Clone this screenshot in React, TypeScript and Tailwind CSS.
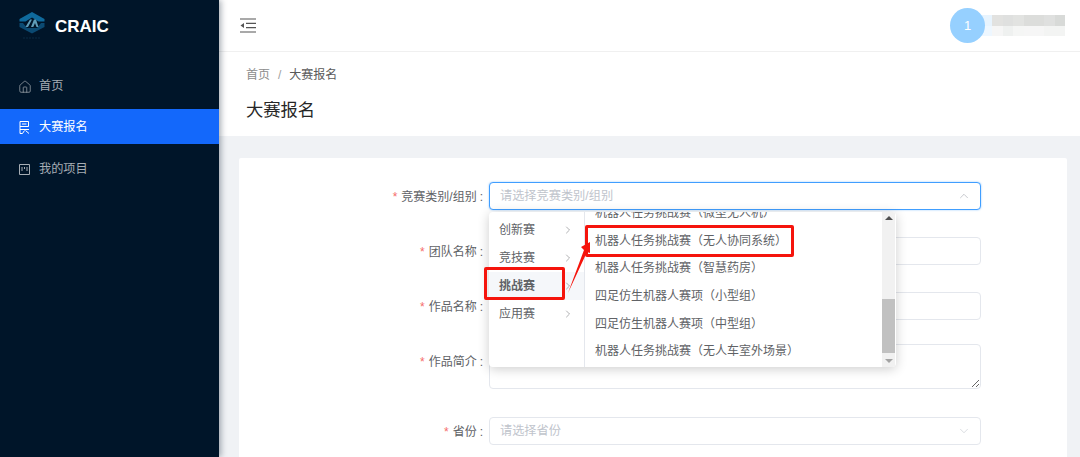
import { ChevronRight, ChevronUp, ChevronDown, Home } from 'lucide-react';

const font = "[font-family:'Liberation_Sans','Noto_Sans_CJK_SC',sans-serif]";

const FIRST_COLUMN = ['创新赛', '竞技赛', '挑战赛', '应用赛'];

const SECOND_COLUMN = [
  '机器人任务挑战赛（无人协同系统）',
  '机器人任务挑战赛（智慧药房）',
  '四足仿生机器人赛项（小型组）',
  '四足仿生机器人赛项（中型组）',
  '机器人任务挑战赛（无人车室外场景）',
];

const MOSAIC_TOP = ['#e8f4fe', '#e2e2e0', '#dfe0df', '#e2e3e1', '#dcdddb', '#dcdddb', '#dfe0df', '#d8dad8'];
const MOSAIC_BOTTOM = ['#eef7ff', '#f6f6f6', '#eff1f0', '#f5f6f5', '#f6f6f6', '#f6f6f6', '#f3f4f3', '#f3f4f3'];

const Logo = () => (
  <svg width="26" height="28" viewBox="0 0 26 28" fill="none">
    <path d="M0.5 7 L13 0 L25.5 7 V9.5 L19.5 9.5 L13 5.5 L6.5 9.5 H0.5 Z" fill="#0f6a9c" />
    <path d="M0.5 11 H4 L8 16 H13 H18 L22 11 H25.5 V15 L13 21.5 L0.5 15 Z" fill="#0b4a72" />
    <path d="M6.5 15 L11 7.5 H13 L9 15 Z M12 15 L15 7.5 H17 L19.5 15 H17.5 L16 11 L14.3 15 Z" fill="#5f9db8" />
    <path d="M4 26 H22" stroke="#0a2a42" strokeWidth="1" strokeDasharray="2 1" />
  </svg>
);

const MenuToggle = () => (
  <svg width="16" height="15" viewBox="0 0 16 15" fill="none" stroke="#555" strokeWidth="1.2">
    <path d="M0 1 H16 M6 5.3 H16 M6 9.6 H16 M0 14 H16" />
    <path d="M4 5 L0.5 7.5 L4 10 Z" fill="#555" stroke="none" />
  </svg>
);

const SignupIcon = () => (
  <svg width="11" height="13" viewBox="0 0 11 13" fill="none" stroke="currentColor" strokeWidth="1">
    <path d="M1 12.5 V0.5 H9.5 V5.5 H1 M3 3 H7.5 M1 8.5 H10 M1 12.5 H3.5 L5.5 9.5 M6.5 9.5 L10 12.5" />
  </svg>
);

const ProjectIcon = () => (
  <svg width="11" height="11" viewBox="0 0 11 11" fill="none" stroke="currentColor" strokeWidth="1">
    <path d="M0.5 0.5 H10.5 V10.5 H0.5 Z M3 3 V7 M5.5 3 V5 M8 3 V7" />
  </svg>
);

const Label = ({ text, className = '' }: { text: string; className?: string }) => (
  <label className={`flex h-[28px] w-[250px] items-center justify-end pr-[6px] pt-px text-[12px] text-[#606266] ${className}`}>
    <span className="mr-[4px] text-[#f56c6c]">*</span>
    {text}
    <span className="ml-[3px]">:</span>
  </label>
);

const Field = ({ label, placeholder, top, icon }: { label: string; placeholder?: string; top: string; icon?: boolean }) => (
  <div className={`flex items-start ${top}`}>
    <Label text={label} />
    <div className="flex h-[28px] w-[492px] items-center justify-between rounded-[4px] border border-[#e4e7ed] bg-white pl-[10px] pr-[9px] text-[12.2px] text-[#c0c4cc]">
      <span>{placeholder}</span>
      {icon && <ChevronDown size={14} strokeWidth={1} className="text-[#c0c4cc]" />}
    </div>
  </div>
);

const Cascader = () => (
  <div className="absolute left-[250px] top-[54px] z-10 flex h-[155px] w-[407px] overflow-hidden rounded-[4px] bg-white text-[12px] text-[#606266] shadow-[0_2px_12px_rgba(0,0,0,0.2)]">
    <ul className="w-[96px] shrink-0 border-r border-[#e4e7ed] pt-[4px]">
      {FIRST_COLUMN.map((item) => (
        <li
          key={item}
          className={`flex h-[28px] items-center justify-between pl-[10px] pr-[10px] ${
            item === '挑战赛' ? 'bg-[#f5f7fa] font-bold' : ''
          }`}
        >
          {item}
          <ChevronRight size={12} strokeWidth={1} className="text-[#606266]" />
        </li>
      ))}
    </ul>
    <div className="relative flex-1 overflow-hidden">
      <ul className="-mt-[13px] pl-[10px]">
        <li className="flex h-[28px] items-center">机器人任务挑战赛（微型无人机）</li>
        {SECOND_COLUMN.map((item) => (
          <li key={item} className="flex h-[27.6px] items-center whitespace-nowrap">
            {item}
          </li>
        ))}
      </ul>
      <div className="absolute bottom-0 right-[1px] top-0 flex w-[13px] flex-col items-center justify-between bg-[#f1f1f1] py-[4px]">
        <span className="h-0 w-0 border-x-[4px] border-b-[4px] border-x-transparent border-b-[#505050]" />
        <span className="absolute bottom-[14px] left-0 h-[54px] w-full bg-[#c1c1c1]" />
        <span className="h-0 w-0 border-x-[4px] border-t-[4px] border-x-transparent border-t-[#a3a3a3]" />
      </div>
    </div>
  </div>
);

export default function App() {
  return (
    <div className={`flex h-[457px] w-[1080px] overflow-hidden bg-[#f0f2f5] ${font}`}>
      <aside className="z-20 w-[219px] shrink-0 bg-[#001529] shadow-[2px_0_6px_rgba(0,21,41,0.35)]">
        <div className="flex h-[51px] items-start pl-[19px] pt-[12px]">
          <Logo />
          <span className="ml-[10px] pt-[2px] text-[17px] font-bold text-white">CRAIC</span>
        </div>
        <nav className="mt-[18px] text-[12.2px]">
          <div className="flex h-[35px] items-center gap-[7px] pl-[18px] text-[#a6adb4]">
            <Home size={14} strokeWidth={1.2} />
            首页
          </div>
          <div className="mt-[5px] flex h-[35px] items-center gap-[9px] bg-[#1368fb] pl-[19px] pt-[2px] text-white">
            <SignupIcon />
            大赛报名
          </div>
          <div className="mt-[7px] flex h-[35px] items-center gap-[9px] pl-[19px] pt-[2px] text-[#a6adb4]">
            <ProjectIcon />
            我的项目
          </div>
        </nav>
      </aside>

      <main className="min-w-0 flex-1">
        <header className="flex h-[52px] items-center justify-between border-b border-[#f0f0f0] bg-white pl-[21px] pr-[15px]">
          <MenuToggle />
          <div className="flex items-center">
            <div className="z-10 flex h-[35px] w-[35px] items-center justify-center rounded-full bg-[#96d0ff] text-[13px] text-white">
              1
            </div>
            <div className="-ml-[3px] w-[83px]">
              <div className="flex h-[11px]">
                {MOSAIC_TOP.map((c, i) => (
                  <span key={i} className="flex-1" style={{ backgroundColor: c }} />
                ))}
              </div>
              <div className="flex h-[10px]">
                {MOSAIC_BOTTOM.map((c, i) => (
                  <span key={i} className="flex-1" style={{ backgroundColor: c }} />
                ))}
              </div>
            </div>
          </div>
        </header>

        <div className="h-[84px] bg-white pl-[27px]">
          <div className="pt-[16px] text-[12px] leading-[15px] text-[#8c8c8c]">
            首页<span className="mx-[8px] text-[#a0a0a0]">/</span>
            <span className="text-[#595959]">大赛报名</span>
          </div>
          <h1 className="mt-[15px] text-[17.3px] leading-[24px] text-[#262626]">大赛报名</h1>
        </div>

        <section className="relative mx-[20px] mt-[22px] h-[320px] w-[828px] rounded-[2px] bg-white pt-[24px]">
          <div className="flex items-start">
            <Label text="竞赛类别/组别" />
            <div className="flex h-[28px] w-[492px] items-center justify-between rounded-[4px] border border-[#409eff] bg-white pl-[10px] pr-[9px] text-[12.2px] text-[#c0c4cc] shadow-[0_0_2px_rgba(64,158,255,0.6)]">
              <span>请选择竞赛类别/组别</span>
              <ChevronUp size={14} strokeWidth={1} className="text-[#a0a4ac]" />
            </div>
          </div>
          <Field label="团队名称" top="mt-[27px]" />
          <Field label="作品名称" top="mt-[27px]" />
          <div className="mt-[24px] flex items-start">
            <Label text="作品简介" className="mt-[3px]" />
            <textarea
              readOnly
              className="block h-[45px] w-[492px] resize-y rounded-[4px] border border-[#e4e7ed] bg-white outline-none"
            />
          </div>
          <Field label="省份" placeholder="请选择省份" top="mt-[28px]" icon />

          <Cascader />

          <div className="absolute left-[245px] top-[109px] z-20 h-[33px] w-[81px] rounded-[2px] border-[3px] border-[#f5140c]" />
          <div className="absolute left-[346px] top-[67px] z-20 h-[32px] w-[209px] rounded-[2px] border-[3px] border-[#f5140c]" />
          <svg className="absolute left-[327px] top-[70px] z-20" width="28" height="70" viewBox="0 0 28 70" fill="none">
            <path d="M2 65 L18 22 L15 19 L24 14 L24 25 L21 24 Z" fill="#f5140c" />
          </svg>
        </section>
      </main>
    </div>
  );
}
